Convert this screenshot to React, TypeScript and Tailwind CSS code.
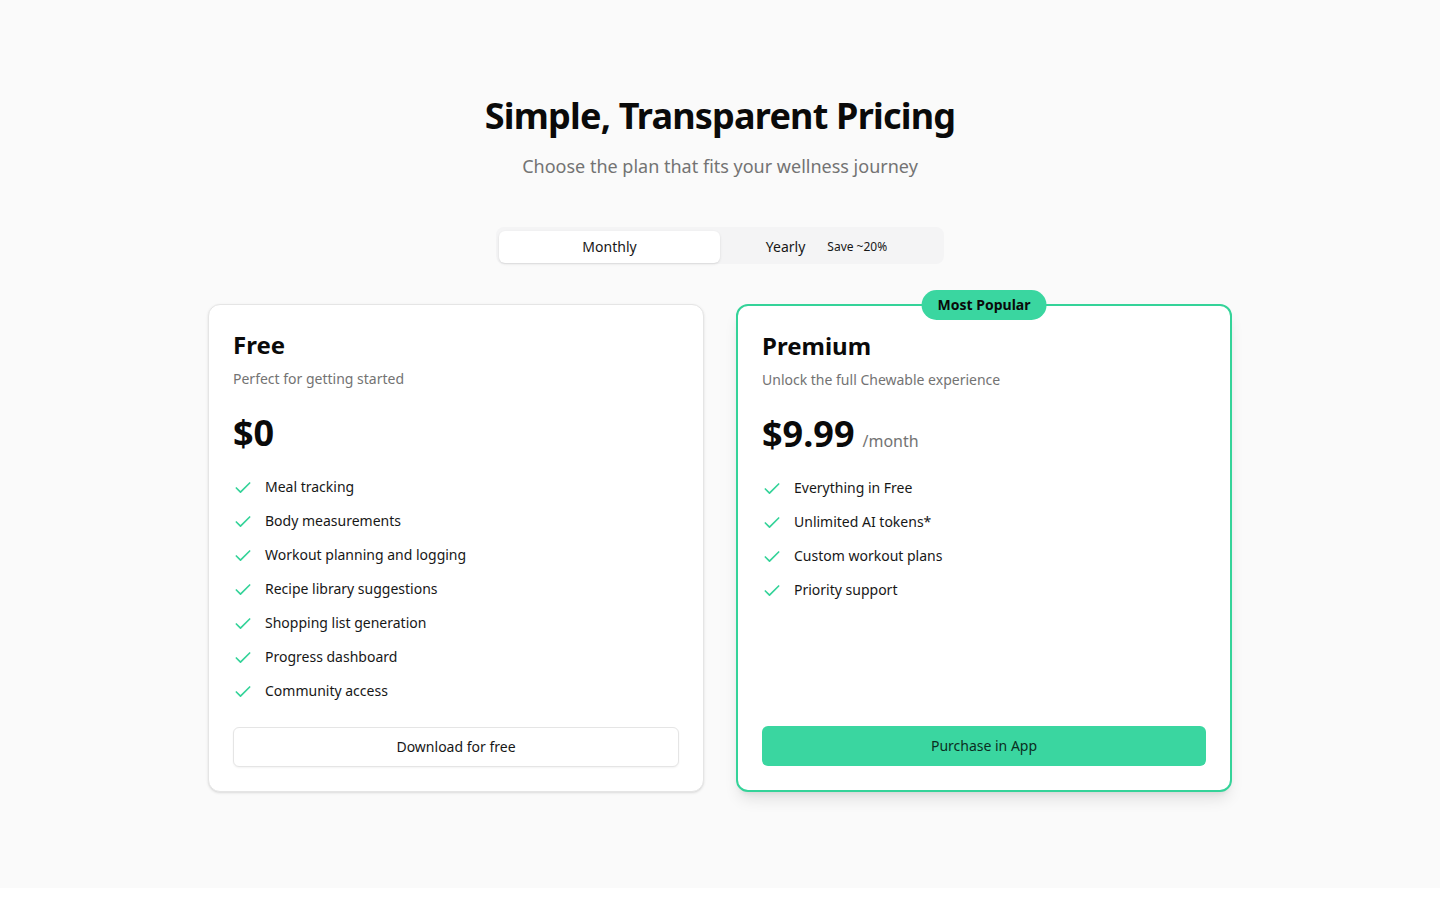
import React from "react";

const Check = () => (
  <svg className="h-5 w-5 shrink-0 translate-y-[1px] text-[#34d399]" viewBox="0 0 24 24" fill="none" stroke="currentColor" strokeWidth="2" strokeLinecap="round" strokeLinejoin="round">
    <path d="M20 6 9 17l-5-5" />
  </svg>
);

const freeFeatures = [
  "Meal tracking",
  "Body measurements",
  "Workout planning and logging",
  "Recipe library suggestions",
  "Shopping list generation",
  "Progress dashboard",
  "Community access",
];

const premiumFeatures = [
  "Everything in Free",
  "Unlimited AI tokens*",
  "Custom workout plans",
  "Priority support",
];

function Features({ items }: { items: string[] }) {
  return (
    <ul className="mt-6 flex flex-1 flex-col gap-[14px]">
      {items.map((f) => (
        <li key={f} className="flex items-center gap-3 text-sm leading-5 text-[#171717]">
          <Check />
          <span>{f}</span>
        </li>
      ))}
    </ul>
  );
}

export default function App() {
  return (
    <div className="bg-white" style={{ fontFamily: '"Noto Sans", "Open Sans", sans-serif' }}>
      <section className="bg-[#fafafa] py-24">
        <div className="text-center">
          <h1 className="text-4xl font-bold leading-10 tracking-[-0.022em] text-[#0a0a0a]">Simple, Transparent Pricing</h1>
          <p className="mt-4 text-lg leading-7 text-[#737373]">Choose the plan that fits your wellness journey</p>
        </div>

        <div className="mx-auto mt-[47px] grid h-[37px] w-[448px] grid-cols-2 rounded-lg bg-[#f4f4f5] px-[3px] pt-[4px] pb-[1px]">
          <div className="flex items-center justify-center rounded-md bg-white text-sm text-[#171717] shadow-sm">Monthly</div>
          <div className="flex items-center justify-center gap-[22px] pr-2 text-sm text-[#171717]">
            <span>Yearly</span>
            <span className="text-xs">Save ~20%</span>
          </div>
        </div>

        <div className="mx-auto mt-10 grid max-w-5xl grid-cols-2 gap-8">
          <div className="flex flex-col rounded-xl border border-[#e5e5e5] bg-white p-6 shadow-sm">
            <h3 className="text-2xl font-bold leading-8 text-[#0a0a0a]">Free</h3>
            <p className="mt-2 text-sm leading-5 text-[#737373]">Perfect for getting started</p>
            <div className="mt-6 text-4xl font-bold leading-10 text-[#0a0a0a]">$0</div>
            <Features items={freeFeatures} />
            <button className="mt-[26px] h-10 w-full rounded-md border border-[#e5e5e5] bg-white text-sm text-[#171717] shadow-xs">Download for free</button>
          </div>

          <div className="relative flex flex-col rounded-xl border-2 border-[#34d399] bg-white p-6 shadow-lg">
            <div className="absolute -top-[16px] left-1/2 -translate-x-1/2 rounded-full bg-[#3ad6a0] px-4 py-[5px] text-sm font-bold leading-5 text-[#0a0a0a]">Most Popular</div>
            <h3 className="text-2xl font-bold leading-8 text-[#0a0a0a]">Premium</h3>
            <p className="mt-2 text-sm leading-5 text-[#737373]">Unlock the full Chewable experience</p>
            <div className="mt-6 flex items-baseline gap-2">
              <span className="text-4xl font-bold leading-10 text-[#0a0a0a]">$9.99</span>
              <span className="text-base text-[#737373]">/month</span>
            </div>
            <Features items={premiumFeatures} />
            <button className="mt-[26px] h-10 w-full rounded-md bg-[#3ad6a0] text-sm text-[#0b2e22]">Purchase in App</button>
          </div>
        </div>
      </section>
    </div>
  );
}
